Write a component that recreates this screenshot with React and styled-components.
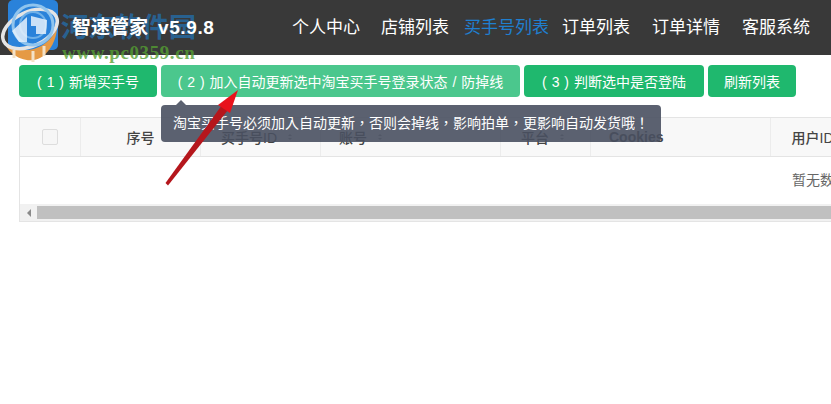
import React from 'react';
import styled, { createGlobalStyle } from 'styled-components';

const Global = createGlobalStyle`
  html, body {
    margin: 0;
    padding: 0;
    background: #fff;
    overflow: hidden;
    font-family: "Liberation Sans", "Noto Sans CJK SC", sans-serif;
  }
`;

const Page = styled.div`
  position: relative;
  width: 831px;
  height: 404px;
  overflow: hidden;
`;

const Header = styled.header`
  height: 55px;
  background: #393939;
  display: flex;
  align-items: center;
  padding-left: 72px;
  padding-bottom: 5px;
  box-sizing: border-box;
`;

const Brand = styled.div`
  position: relative;
  z-index: 2;
  color: #fff;
  font-size: 19px;
  font-weight: 700;
  width: 220px;
  white-space: nowrap;
`;

const Version = styled.span`
  margin-left: 10px;
  letter-spacing: 0.6px;
`;

const Nav = styled.nav`
  display: flex;
  font-size: 17px;
`;

const NavItem = styled.a`
  color: ${p => (p.$active ? '#1f7fd0' : '#fff')};
  width: ${p => p.$w}px;
  white-space: nowrap;
`;

const Toolbar = styled.div`
  display: flex;
  gap: 4px;
  padding: 10px 0 0 19px;
`;

const Button = styled.button`
  height: 32px;
  padding: 0;
  width: ${p => p.$w}px;
  border: 0;
  border-radius: 4px;
  background: ${p => (p.$hover ? '#4bc78d' : '#1fb86e')};
  color: #fff;
  font-family: inherit;
  font-size: 14px;
  word-spacing: 1px;
  white-space: pre;
`;

const Tooltip = styled.div`
  position: absolute;
  left: 161px;
  top: 105px;
  width: 500px;
  height: 37px;
  box-sizing: border-box;
  padding-left: 12px;
  line-height: 34px;
  border-radius: 4px;
  background: rgba(73, 80, 96, 0.9);
  color: #fff;
  font-family: "Noto Sans CJK TC", sans-serif;
  font-size: 14px;
  white-space: nowrap;
  z-index: 2;

  &::before {
    content: '';
    position: absolute;
    left: 15px;
    top: -5px;
    border: 5px solid transparent;
    border-top: 0;
    border-bottom-color: rgba(73, 80, 96, 0.9);
  }
`;

const Table = styled.div`
  width: 1600px;
  margin: 20px 0 0 19px;
  border: 1px solid #e4e4e4;
`;

const HeadRow = styled.div`
  display: flex;
  height: 38px;
  background: #f8f8f8;
  border-bottom: 1px solid #e4e4e4;
`;

const HeadCell = styled.div`
  width: ${p => p.$w}px;
  flex: none;
  box-sizing: border-box;
  display: flex;
  align-items: center;
  justify-content: ${p => (p.$left ? 'flex-start' : 'center')};
  padding-left: ${p => (p.$left ? p.$left : 0)}px;
  gap: 11px;
  border-right: 1px solid #ececec;
  color: #444;
  font-size: 14px;
  font-weight: ${p => (p.$bold ? 700 : 500)};
  white-space: nowrap;
`;

const Sort = styled.span`
  display: flex;
  flex-direction: column;
  gap: 2px;

  &::before,
  &::after {
    content: '';
    border: 2px solid transparent;
  }
  &::before {
    border-top: 0;
    border-bottom-color: #999;
  }
  &::after {
    border-bottom: 0;
    border-top-color: #999;
  }
`;

const Check = styled.span`
  width: 14px;
  height: 14px;
  border: 1px solid #ddd;
  border-radius: 2px;
  background: #f6f6f6;
`;

const Empty = styled.div`
  height: 47px;
  line-height: 46px;
  text-align: center;
  color: #666;
  font-size: 14px;
`;

const Scrollbar = styled.div`
  display: flex;
  align-items: center;
  height: 17px;
  background: #f1f1f1;
`;

const ScrollLeft = styled.div`
  width: 17px;
  flex: none;
  display: flex;
  justify-content: center;
  &::before {
    content: '';
    border: 4px solid transparent;
    border-left: 0;
    border-right-color: #8a8a8a;
  }
`;

const ScrollThumb = styled.div`
  width: 900px;
  height: 13px;
  background: #c0c0c0;
`;

const Overlay = styled.svg`
  position: absolute;
  left: 0;
  top: 0;
  z-index: 3;
  pointer-events: none;
`;

const WatermarkTitle = styled.div`
  position: absolute;
  left: 61px;
  top: 6px;
  z-index: 1;
  font-size: 27px;
  font-weight: 700;
  color: rgba(30, 125, 205, 0.6);
  white-space: nowrap;
`;

const WatermarkUrl = styled.div`
  position: absolute;
  left: 62px;
  top: 42px;
  z-index: 4;
  font-family: "Liberation Serif", serif;
  font-size: 19px;
  font-weight: 700;
  letter-spacing: 0.6px;
  color: rgba(85, 160, 50, 0.8);
  white-space: nowrap;
`;

const columns = [
  { w: 61, check: true },
  { w: 120, label: '序号' },
  { w: 120, label: '买手号ID', sort: true, left: 20 },
  { w: 180, label: '账号', sort: true, left: 18 },
  { w: 90, label: '平台', sort: true, left: 20 },
  { w: 180, label: 'Cookies', bold: true, left: 18 },
  { w: 84, label: '用户ID' },
];

const navs = [
  { label: '个人中心', w: 89 },
  { label: '店铺列表', w: 83 },
  { label: '买手号列表', w: 98, active: true },
  { label: '订单列表', w: 90 },
  { label: '订单详情', w: 90 },
  { label: '客服系统', w: 70 },
];

export default function App() {
  return (
    <Page>
      <Global />
      <Header>
        <Brand>智速管家<Version>v5.9.8</Version></Brand>
        <Nav>
          {navs.map(n => (
            <NavItem key={n.label} $w={n.w} $active={n.active}>{n.label}</NavItem>
          ))}
        </Nav>
      </Header>

      <Toolbar>
        <Button $w={138}>( 1 ) 新增买手号</Button>
        <Button $w={359} $hover>( 2 ) 加入自动更新选中淘宝买手号登录状态 / 防掉线</Button>
        <Button $w={180}>( 3 ) 判断选中是否登陆</Button>
        <Button $w={88}>刷新列表</Button>
      </Toolbar>

      <Tooltip>淘宝买手号必须加入自动更新，否则会掉线，影响拍单，更影响自动发货哦！</Tooltip>

      <Table>
        <HeadRow>
          {columns.map((c, i) => (
            <HeadCell key={i} $w={c.w} $bold={c.bold} $left={c.left}>
              {c.check ? <Check /> : c.label}
              {c.sort && <Sort />}
            </HeadCell>
          ))}
        </HeadRow>
        <Empty>暂无数据</Empty>
        <Scrollbar>
          <ScrollLeft />
          <ScrollThumb />
        </Scrollbar>
      </Table>

      <WatermarkTitle>河东软件园</WatermarkTitle>
      <WatermarkUrl>www.pc0359.cn</WatermarkUrl>

      <Overlay width="831" height="404" viewBox="0 0 831 404">
        {/* logo */}
        <rect x="8" y="0" width="50" height="50" rx="5" fill="#2a82da" />
        <path d="M3 38 C6 52 20 62 34 60 C46 58 56 44 57 28 C52 40 40 50 26 50 C16 50 8 46 3 38 Z" fill="#e59a45" />
        <path d="M14 50 L14 58 M33 51 L33 62 M44 46 L44 56" stroke="#f3e2c8" strokeWidth="3" />
        <ellipse cx="30" cy="29" rx="29" ry="17" transform="rotate(-25 30 29)" fill="none" stroke="#e4e4e4" strokeWidth="3.5" />
        <circle cx="33" cy="25" r="20" fill="none" stroke="#8fc4ee" strokeWidth="3" />
        <circle cx="33" cy="25" r="13" fill="none" stroke="#6fb0e8" strokeWidth="2" />
        <path d="M12 31 L27 17 L27 42 L19 42 Z M31 16 L47 20 L46 34 L36 34 L36 26 L31 26 Z" fill="#e6f1fb" opacity="0.85" />
        {/* arrow */}
        <path d="M165.5 183 L168 185.5 L228 110 L222 105 Z" fill="#b5161c" />
        <path d="M238 90 L218 105 L230 113 Z" fill="#e8121c" />
      </Overlay>
    </Page>
  );
}
